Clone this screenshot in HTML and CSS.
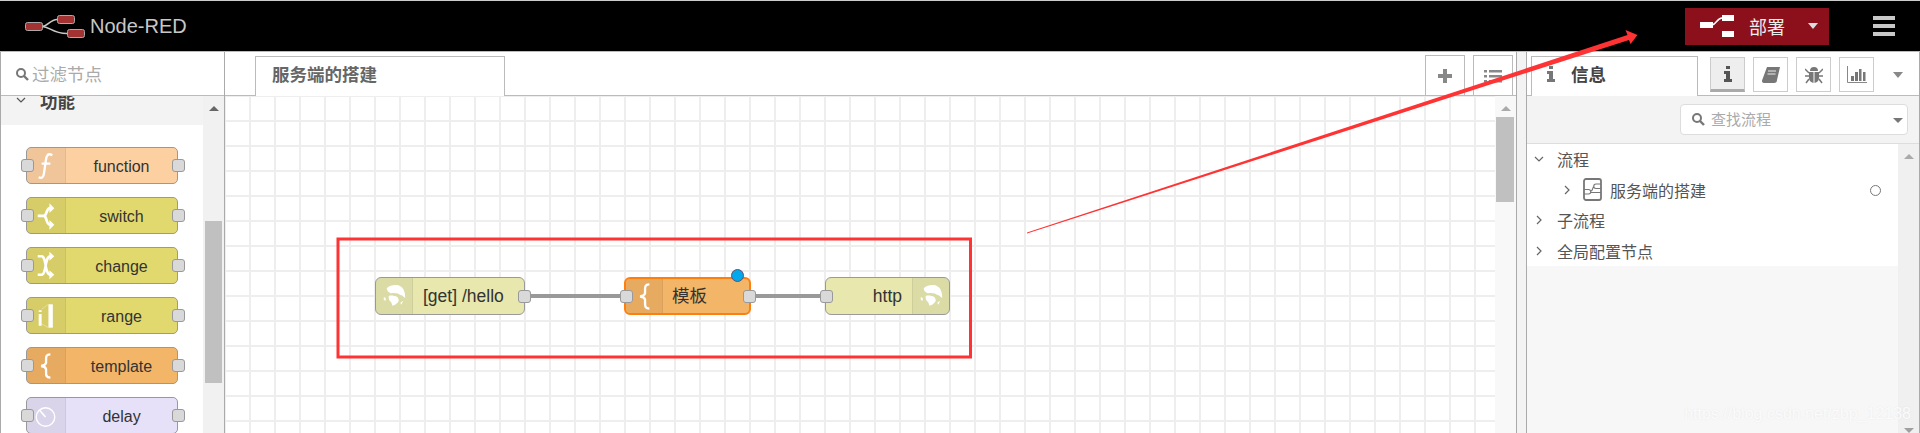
FILE: index.html
```html
<!DOCTYPE html>
<html lang="zh-CN">
<head>
    <meta charset="UTF-8">
    <title>Node-RED</title>
    <link rel="stylesheet" href="styles.css">
</head>
<body>
    <header class="topbar">
        <div class="brand">
            <svg class="brand-logo" width="60" height="23" viewBox="0 0 60 23">
                <path d="M17 11.500C23 11.500 25 4.500 32 4.500M17 11.500C25 11.500 27 18.500 42 18.500" fill="none" stroke="#c8c8c8" stroke-width="1.500"/>
                <rect x="0.500" y="7.500" width="17" height="8" rx="2" fill="#a33233" stroke="#aaa"/>
                <rect x="32.500" y="0.500" width="17" height="8" rx="2" fill="#a33233" stroke="#aaa"/>
                <rect x="42.500" y="14.500" width="17" height="8" rx="2" fill="#a33233" stroke="#aaa"/>
            </svg>
            <span>Node-RED</span>
        </div>
        <div class="topbar-right">
            <div class="deploy">
                <svg width="34" height="22" viewBox="0 0 34 22">
                    <path d="M12 10C16 10 17 3 22 3" fill="none" stroke="#fff" stroke-width="1.500"/>
                    <rect x="0" y="7" width="13" height="6" fill="#fff"/>
                    <rect x="22" y="0" width="12" height="6" fill="#fff"/>
                    <rect x="22" y="16" width="12" height="6" fill="#fff"/>
                </svg>
                <span class="deploy-label">部署</span>
                <span class="deploy-caret"></span>
            </div>
            <div class="menu-btn"><i></i><i></i><i></i></div>
        </div>
    </header>

    <main class="app">
        <aside class="palette">
            <div class="filter">
                <svg width="14" height="14" viewBox="0 0 14 14"><circle cx="6" cy="6" r="4" fill="none" stroke="#777" stroke-width="2"/><path d="M9 9l4 4" stroke="#777" stroke-width="2.400"/></svg>
                <span>过滤节点</span>
            </div>
            <div class="palette-body">
                <div class="palette-list">
                    <div class="category">
                        <svg width="10" height="6" viewBox="0 0 10 6"><path d="M1 1l4 4 4-4" fill="none" stroke="#555" stroke-width="1.200"/></svg>
                        <span>功能</span>
                    </div>
                    <div class="palette-nodes">
                        <div class="pnode c-function">
                            <i class="port port-l"></i>
                            <div class="pnode-icon"><svg width="39" height="35" viewBox="0 0 39 35"><path d="M26 7C21 4 20 8 19.400 12L17.500 25C17 30 15 31 12 29.500M15 15.500H24" fill="none" stroke="#fff" stroke-width="2.400"/></svg></div>
                            <span>function</span>
                            <i class="port port-r"></i>
                        </div>
                        <div class="pnode c-func2">
                            <i class="port port-l"></i>
                            <div class="pnode-icon"><svg width="39" height="35" viewBox="0 0 39 35"><path d="M11 18H17C21 18 19 10 24 10M17 18C21 18 19 27 24 27" fill="none" stroke="#fff" stroke-width="2.800"/><path d="M23 5l5 5-5 5zM23 22l5 5-5 5z" fill="#fff"/></svg></div>
                            <span>switch</span>
                            <i class="port port-r"></i>
                        </div>
                        <div class="pnode c-func2">
                            <i class="port port-l"></i>
                            <div class="pnode-icon"><svg width="39" height="35" viewBox="0 0 39 35"><path d="M11 8H15C20 8 18 27 24 27M11 27H15C20 27 18 8 24 8" fill="none" stroke="#fff" stroke-width="2.600"/><path d="M23 3.500l5 4.500-5 4.500zM23 22.500l5 4.500-5 4.500z" fill="#fff"/></svg></div>
                            <span>change</span>
                            <i class="port port-r"></i>
                        </div>
                        <div class="pnode c-func2">
                            <i class="port port-l"></i>
                            <div class="pnode-icon"><svg width="39" height="35" viewBox="0 0 39 35"><path d="M12 12h3v2h-3zM12 16h3v12h-3z" fill="#fff"/><path d="M22 6h4.500v24H22z" fill="#fff"/><path d="M15 11l7-5M15 26l7 4" stroke="#fff" stroke-width=".6" opacity=".6"/></svg></div>
                            <span>range</span>
                            <i class="port port-r"></i>
                        </div>
                        <div class="pnode c-template">
                            <i class="port port-l"></i>
                            <div class="pnode-icon"><svg width="39" height="35" viewBox="0 0 39 35"><path d="M24 6C18 6 20 11 19.500 15C19 17 17.500 17.500 14.500 18C17.500 18.500 19 19 19.500 21C20 25 18 30 24 30" fill="none" stroke="#fff" stroke-width="2.400"/></svg></div>
                            <span>template</span>
                            <i class="port port-r"></i>
                        </div>
                        <div class="pnode c-delay">
                            <i class="port port-l"></i>
                            <div class="pnode-icon"><svg width="39" height="35" viewBox="0 0 39 35"><circle cx="19" cy="19" r="9.500" fill="none" stroke="#fff" stroke-width="1.400"/><path d="M19 19l-6-7" stroke="#fff" stroke-width="1.600"/></svg></div>
                            <span>delay</span>
                            <i class="port port-r"></i>
                        </div>
                    </div>
                </div>
                <div class="scrollbar palette-scroll">
                    <span class="arrow-up"></span>
                    <div class="thumb"></div>
                </div>
            </div>
        </aside>

        <section class="workspace">
            <div class="ws-tabs">
                <div class="ws-tab">服务端的搭建</div>
                <div class="ws-tools">
                    <div class="tool-btn"><svg width="16" height="16" viewBox="0 0 16 16"><path d="M6 1h4v5h5v4h-5v5H6v-5H1V6h5z" fill="#888"/></svg></div>
                    <div class="tool-btn"><svg width="18" height="14" viewBox="0 0 18 14"><path d="M0 1h3v2.500H0zM0 6h3v2.500H0zM0 11h3v2.500H0zM5 1h13v2.500H5zM5 6h13v2.500H5zM5 11h13v2.500H5z" fill="#888"/></svg></div>
                </div>
            </div>
            <div class="canvas">
                <svg class="wires" width="700" height="337">
                    <path d="M300 200H400M525 200H600" stroke="#999" stroke-width="4"/>
                </svg>

                <div class="fnode fnode-get">
                    <div class="pnode-icon"><svg width="37" height="36" viewBox="0 0 37 36"><use href="#globe"/></svg></div>
                    <span>[get] /hello</span>
                    <i class="port port-r"></i>
                </div>

                <div class="fnode fnode-template">
                    <i class="port port-l"></i>
                    <div class="pnode-icon"><svg width="37" height="34" viewBox="0 0 37 34"><path d="M24 5C18 5 20 10 19.500 14.500C19 16.500 17.500 17 14.500 17.500C17.500 18 19 18.500 19.500 20.500C20 25 18 30 24 30" fill="none" stroke="#fff" stroke-width="2.400"/></svg></div>
                    <span>模板</span>
                    <i class="port port-r"></i>
                    <b class="changed-dot"></b>
                </div>

                <div class="fnode fnode-http">
                    <i class="port port-l"></i>
                    <span>http</span>
                    <div class="pnode-icon"><svg width="37" height="36" viewBox="0 0 37 36"><use href="#globe"/></svg></div>
                </div>

                <div class="scrollbar canvas-scroll">
                    <span class="arrow-up"></span>
                    <div class="thumb"></div>
                </div>
            </div>
        </section>

        <div class="separator"></div>

        <aside class="sidebar">
            <div class="side-tabs">
                <div class="side-tab">
                    <svg width="10" height="16" viewBox="0 0 10 16"><path d="M3 0h4v3H3zM1 5h6v8h2v3H1v-3h2V8H1z" fill="#777"/></svg>
                    <span>信息</span>
                </div>
                <div class="side-btn is-active"><svg width="10" height="16" viewBox="0 0 10 16"><path d="M3 0h4v3H3zM1 5h6v8h2v3H1v-3h2V8H1z" fill="#555"/></svg></div>
                <div class="side-btn"><svg width="18" height="16" viewBox="0 0 18 16"><path d="M5 0h13l-3 13a3 3 0 0 1-3 3H2a2 2 0 0 1-2-2.500z" fill="#777"/><path d="M6 4h8M5.500 7h8" stroke="#eee"/></svg></div>
                <div class="side-btn"><svg width="18" height="18" viewBox="0 0 18 18"><path d="M5 5a4 4 0 0 1 8 0zM4 6h10v6a5 5 0 0 1-10 0z" fill="#777"/><path d="M0 3l4 4M18 3l-4 4M0 10h4M14 10h4M1 17l3-4M17 17l-3-4" stroke="#777" stroke-width="1.500"/><path d="M9 6v11" stroke="#fff"/></svg></div>
                <div class="side-btn"><svg width="20" height="17" viewBox="0 0 20 17"><path d="M.5 0v16.500H20" fill="none" stroke="#888"/><path d="M4 10h3v5H4zM8 6h3v9H8zM12 3h2.500v12H12zM16 6h2.500v9H16z" fill="#777"/></svg></div>
                <span class="side-caret"></span>
            </div>
            <div class="side-search-row">
                <div class="side-search">
                    <svg width="14" height="14" viewBox="0 0 14 14"><circle cx="6" cy="6" r="4" fill="none" stroke="#777" stroke-width="2"/><path d="M9 9l4 4" stroke="#777" stroke-width="2.400"/></svg>
                    <span>查找流程</span>
                    <span class="search-caret"></span>
                </div>
            </div>
            <div class="side-body">
                <div class="tree-col">
                    <ul class="tree">
                        <li class="tree-row">
                            <svg class="chev" width="10" height="10" viewBox="0 0 10 10"><path d="M1 3l4 4 4-4" fill="none" stroke="#666" stroke-width="1.200"/></svg>
                            <span>流程</span>
                        </li>
                        <li class="tree-row tree-child">
                            <svg class="chev" width="10" height="10" viewBox="0 0 10 10"><path d="M3 1l4 4-4 4" fill="none" stroke="#666" stroke-width="1.200"/></svg>
                            <svg class="flow-icon" width="19" height="23" viewBox="0 0 19 23"><rect x="1" y="1" width="17" height="21" rx="2" fill="none" stroke="#777" stroke-width="1.800"/><path d="M18 6H13a2 2 0 0 0 0 4.500h5M1 11.500H5.500a2 2 0 0 1 0 4.500H1M8 13C10 13 9.500 8.500 11 8.500M8 14.500H18" fill="none" stroke="#777" stroke-width="1.100"/></svg>
                            <span>服务端的搭建</span>
                            <i class="status-dot"></i>
                        </li>
                        <li class="tree-row">
                            <svg class="chev" width="10" height="10" viewBox="0 0 10 10"><path d="M3 1l4 4-4 4" fill="none" stroke="#666" stroke-width="1.200"/></svg>
                            <span>子流程</span>
                        </li>
                        <li class="tree-row">
                            <svg class="chev" width="10" height="10" viewBox="0 0 10 10"><path d="M3 1l4 4-4 4" fill="none" stroke="#666" stroke-width="1.200"/></svg>
                            <span>全局配置节点</span>
                        </li>
                    </ul>
                </div>
                <div class="scrollbar side-scroll">
                    <span class="arrow-up"></span>
                    <span class="arrow-down"></span>
                </div>
            </div>
        </aside>
    </main>

    <!-- red marks drawn over the screenshot -->
    <svg class="marks" width="1920" height="433" viewBox="0 0 1920 433">
        <rect x="338" y="239" width="632.500" height="118" fill="none" stroke="#f33" stroke-width="3"/>
        <path d="M1027 232.500L1627.500 35L1625.500 30L1637.500 35L1630.500 44L1629 40L1027 233.500Z" fill="#f33"/>
    </svg>
    <div class="watermark">https://blog.csdn.net/zbp_12138</div>

    <svg width="0" height="0" class="defs">
        <symbol id="globe" viewBox="0 0 37 36">
            <path d="M11 10C14 7 19 6 23 7C26 8 28 10 29 13C30 16 30 18 30 20C28 19 27 17 25 17C23 15 21 16 19 15C17 15 15 16 13 14C12 13 11 12 11 10Z" fill="#fff"/>
            <path d="M13 18C16 17 19 18 22 19C23 21 24 22 23 24C21 26 19 28 17 28C16 26 16 24 14 23C13 21 13 20 13 18Z" fill="#fff"/>
            <path d="M8 19l2 1v3l-2-1zM25 25l3-2-2 4z" fill="#fff"/>
        </symbol>
    </svg>
</body>
</html>
```

FILE: styles.css
```css
* {
    box-sizing: border-box;
}

html, body {
    height: 100%;
}

body {
    margin: 0;
    overflow: hidden;
    background: #fff;
    border-top: 1px solid #ccc;
    font-family: "Liberation Sans", "Noto Sans CJK SC", sans-serif;
    position: relative;
}

ul {
    list-style: none;
    margin: 0;
    padding: 0;
}

.defs {
    position: absolute;
}

/* top bar */
.topbar {
    height: 50px;
    background: #000;
    display: flex;
    align-items: center;
    justify-content: space-between;
    padding: 0 25px;
}

.brand {
    display: flex;
    align-items: center;
    gap: 5px;
    color: #c7c7c7;
    font-size: 20px;
}

.topbar-right {
    display: flex;
    align-items: center;
    gap: 44px;
}

.deploy {
    width: 144px;
    height: 37px;
    background: #8c101c;
    display: flex;
    align-items: center;
    padding-left: 15px;
    color: #eee;
}

.deploy-label {
    font-size: 18px;
    margin-left: 15px;
}

.deploy-caret {
    margin-left: 23px;
    border-top: 6px solid #ddd;
    border-left: 5.500px solid transparent;
    border-right: 5.500px solid transparent;
}

.menu-btn {
    width: 22px;
    display: flex;
    flex-direction: column;
    gap: 4px;
}

.menu-btn i {
    height: 4px;
    background: #c8c8c8;
}

/* main row */
.app {
    height: 382px;
    display: flex;
    border-top: 1px solid #bbb;
}

.palette {
    width: 225px;
    border-left: 1px solid #aaa;
    border-right: 1px solid #aaa;
    display: flex;
    flex-direction: column;
}

.filter {
    height: 44px;
    flex: none;
    border-bottom: 1px solid #bbb;
    display: flex;
    align-items: center;
    gap: 3px;
    padding-left: 14px;
    font-size: 17.500px;
    color: #aaa;
}

.palette-body {
    flex: 1;
    display: flex;
    min-height: 0;
}

.palette-list {
    flex: 1;
    overflow: hidden;
}

.category {
    height: 50px;
    margin-top: -21px;
    background: #f3f3f3;
    display: flex;
    align-items: center;
    gap: 14px;
    padding-left: 15px;
    font-size: 17.500px;
    font-weight: bold;
    color: #444;
}

.palette-nodes {
    display: flex;
    flex-direction: column;
    gap: 13px;
    padding: 22px 0 0 25px;
}

.pnode {
    width: 152px;
    height: 37px;
    flex: none;
    position: relative;
    display: flex;
    align-items: center;
    border: 1px solid #999;
    border-radius: 5px;
    font-size: 16px;
    color: #333;
}

.pnode > span {
    flex: 1;
    text-align: center;
    padding-top: 2px;
}

.pnode-icon {
    width: 39px;
    height: 100%;
    flex: none;
    background: rgba(0, 0, 0, 0.05);
    display: flex;
    align-items: center;
    justify-content: center;
}

.pnode > .pnode-icon {
    border-right: 1px solid rgba(0, 0, 0, 0.06);
    border-radius: 4px 0 0 4px;
}

.c-function { background: #fdd0a2; }
.c-func2 { background: #e2d96e; }
.c-template { background: #f3b567; }
.c-delay { background: #e6e0f8; }

.port {
    position: absolute;
    top: 50%;
    width: 13px;
    height: 13px;
    margin-top: -6.500px;
    background: #d9d9d9;
    border: 1px solid #999;
    border-radius: 3px;
}

.port-l { left: -6px; }
.port-r { right: -7px; }
.pnode .port-r { right: -8px; }

.scrollbar {
    width: 21px;
    flex: none;
    background: #f1f1f1;
    position: relative;
}

.arrow-up,
.arrow-down {
    position: absolute;
    left: 50%;
    margin-left: -5px;
    border-left: 5px solid transparent;
    border-right: 5px solid transparent;
}

.arrow-up {
    top: 10px;
    border-bottom: 5px solid #666;
}

.arrow-down {
    bottom: 0;
    border-top: 5px solid #a0a0a0;
}

.thumb {
    position: absolute;
    background: #c0c0c0;
}

.palette-scroll .thumb {
    left: 2px;
    right: 2px;
    top: 125px;
    height: 162px;
}

/* workspace */
.workspace {
    width: 1292px;
    border-right: 1px solid #aaa;
    display: flex;
    flex-direction: column;
}

.ws-tabs {
    height: 44px;
    flex: none;
    border-bottom: 1px solid #bbb;
    display: flex;
    align-items: flex-end;
    justify-content: space-between;
    padding: 0 3px 0 30px;
}

.ws-tab {
    width: 250px;
    height: 40px;
    margin-bottom: -1px;
    background: #fff;
    border: 1px solid #bbb;
    border-bottom: none;
    padding-left: 16px;
    font-size: 17.500px;
    line-height: 36px;
    font-weight: bold;
    color: #666;
}

.ws-tools {
    display: flex;
    gap: 8px;
}

.tool-btn {
    width: 40px;
    height: 40px;
    border: 1px solid #bbb;
    border-bottom: none;
    display: flex;
    align-items: center;
    justify-content: center;
}

.canvas {
    flex: 1;
    position: relative;
    overflow: hidden;
    background-color: #fff;
    background-image:
        linear-gradient(to right, #eee 2px, transparent 2px),
        linear-gradient(to bottom, #eee 2px, transparent 2px);
    background-size: 25px 25px;
    background-position: 24px 24px;
}

.wires {
    position: absolute;
    left: 0;
    top: 0;
}

.fnode {
    position: absolute;
    top: 181px;
    height: 38px;
    display: flex;
    align-items: center;
    border: 1px solid #999;
    border-radius: 6px;
    font-size: 17.500px;
    color: #333;
}

.fnode > span {
    flex: 1;
}

.fnode .pnode-icon {
    width: 37px;
    border-radius: 5px 0 0 5px;
    border-right: 1px solid rgba(0, 0, 0, 0.06);
}

.fnode-get {
    left: 150px;
    width: 150px;
    background: #e7e7ae;
}

.fnode-get > span {
    padding-left: 10px;
}

.fnode-template {
    left: 399px;
    width: 127px;
    background: #f3b567;
    border: 2px solid #ff7f0e;
}

.fnode-template > span {
    font-family: "Noto Sans CJK SC", sans-serif;
    padding: 0 0 4px 9px;
}

.fnode-http {
    left: 600px;
    width: 125px;
    background: #e7e7ae;
}

.fnode-http > span {
    text-align: right;
    padding-right: 10px;
}

.fnode-http .pnode-icon {
    border-radius: 0 5px 5px 0;
    border-right: none;
    border-left: 1px solid rgba(0, 0, 0, 0.06);
}

.changed-dot {
    position: absolute;
    right: 5px;
    top: -10px;
    width: 13px;
    height: 13px;
    background: #00a9ec;
    border: 1px solid #557;
    border-radius: 50%;
}

.canvas-scroll {
    position: absolute;
    right: 0;
    top: 0;
    bottom: 0;
    background: #f8f8f8;
}

.canvas-scroll .arrow-up {
    border-bottom-color: #aaa;
}

.canvas-scroll .thumb {
    left: 1px;
    right: 2px;
    top: 21px;
    height: 85px;
}

.separator {
    width: 9px;
    background: #f3f3f3;
}

/* sidebar */
.sidebar {
    flex: 1;
    border-left: 1px solid #aaa;
    border-right: 1px solid #aaa;
    display: flex;
    flex-direction: column;
}

.side-tabs {
    height: 44px;
    flex: none;
    border-bottom: 1px solid #bbb;
    display: flex;
    align-items: flex-end;
    padding-left: 4px;
    position: relative;
}

.side-tab {
    width: 167px;
    height: 40px;
    margin-bottom: -1px;
    margin-right: 12px;
    background: #fff;
    border: 1px solid #bbb;
    border-bottom: none;
    display: flex;
    align-items: center;
    gap: 15px;
    padding: 0 0 6px 14px;
    font-size: 17.500px;
    font-weight: bold;
    color: #444;
}

.side-btn {
    width: 35px;
    height: 35px;
    margin: 0 8px 3px 0;
    border: 1px solid #ccc;
    display: flex;
    align-items: center;
    justify-content: center;
}

.side-btn.is-active {
    background: #eee;
    border-bottom: 3px solid #aaa;
}

.side-caret {
    position: absolute;
    left: 366px;
    top: 20px;
    border-top: 6px solid #888;
    border-left: 5px solid transparent;
    border-right: 5px solid transparent;
}

.side-search-row {
    height: 48px;
    flex: none;
    background: #f3f3f3;
    border-bottom: 1px solid #ddd;
    padding: 8px 11px 0 153px;
}

.side-search {
    height: 31px;
    background: #fff;
    border: 1px solid #ddd;
    border-radius: 4px;
    display: flex;
    align-items: center;
    gap: 6px;
    padding: 0 0 2px 10px;
    font-size: 15px;
    color: #aaa;
    position: relative;
}

.search-caret {
    position: absolute;
    right: 4px;
    top: 13px;
    border-top: 5px solid #777;
    border-left: 5px solid transparent;
    border-right: 5px solid transparent;
}

.side-body {
    flex: 1;
    display: flex;
    min-height: 0;
}

.tree-col {
    flex: 1;
    background: #f7f7f7;
}

.tree {
    background: #fff;
}

.tree-row {
    height: 30.500px;
    display: flex;
    align-items: center;
    position: relative;
    padding-left: 7px;
    font-size: 16px;
    color: #555;
}

.tree-row .chev {
    margin-right: 13px;
}

.tree-child {
    padding-left: 35px;
}

.tree-child .chev {
    margin-right: 11px;
}

.flow-icon {
    margin-right: 8px;
}

.status-dot {
    position: absolute;
    left: 343px;
    top: 10px;
    width: 11px;
    height: 11px;
    border: 1px solid #777;
    border-radius: 50%;
}

.side-scroll {
    background: #f0f0f0;
}

.side-scroll .arrow-up {
    border-bottom-color: #aaa;
}

/* marks over the picture */
.marks {
    position: absolute;
    left: 0;
    top: -1px;
    pointer-events: none;
}

.watermark {
    position: absolute;
    right: 9px;
    top: 404px;
    font-size: 16px;
    color: #fbfbfb;
    text-shadow: 0 0 2px rgba(0, 0, 0, 0.07);
}
```
